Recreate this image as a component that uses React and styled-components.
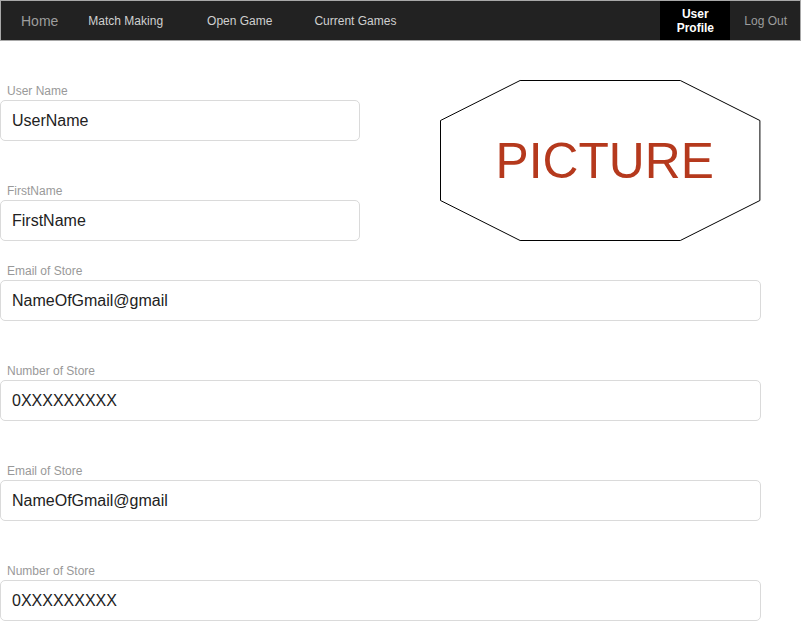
import React from "react";
import styled, { createGlobalStyle } from "styled-components";

const Global = createGlobalStyle`
  html, body { margin: 0; padding: 0; background: #fff; }
  body { font-family: "Liberation Sans", Arial, sans-serif; }
  * { box-sizing: border-box; }
`;

const NavBar = styled.nav`
  display: flex;
  align-items: stretch;
  height: 41px;
  background: #222;
  border: 1px solid #a8a8a8;
`;

const NavLink = styled.a`
  display: flex;
  align-items: center;
  margin-left: ${(p) => p.$ml}px;
  font-size: ${(p) => (p.$big ? 14 : 12)}px;
  color: ${(p) => (p.$muted ? "#9d9d9d" : "#d0d0d0")};
  text-decoration: none;
  white-space: nowrap;
`;

const Spacer = styled.div`
  flex: 1;
`;

const ActiveLink = styled.a`
  display: flex;
  align-items: center;
  justify-content: center;
  width: 70px;
  background: #000;
  color: #fff;
  font-weight: bold;
  font-size: 12px;
  line-height: 14px;
  text-align: center;
  text-decoration: none;
`;

const LogOut = styled.a`
  display: flex;
  align-items: center;
  padding: 0 13px 0 14px;
  font-size: 12px;
  color: #9d9d9d;
  text-decoration: none;
`;

const TopRow = styled.div`
  display: flex;
  align-items: flex-start;
`;

const LeftCol = styled.div`
  width: 55%;
`;

const Field = styled.div`
  display: flex;
  flex-direction: column;
  padding-top: ${(p) => p.$top}px;
`;

const Label = styled.label`
  font-size: 12px;
  line-height: 16px;
  height: 16px;
  color: #999;
  padding-left: 7px;
  transform: translateY(-1px);
`;

const Input = styled.input`
  width: ${(p) => p.$w};
  height: 41px;
  border: 1px solid #dadada;
  border-radius: 5px;
  padding: 0 11px;
  font-family: "Liberation Sans", Arial, sans-serif;
  font-size: 16px;
  color: #222;
  outline: none;
  background: #fff;
`;

const PictureBox = styled.div`
  width: 40%;
  margin-top: 39px;
  height: 160px;
  svg { overflow: visible; display: block; }
`;

const fields = [
  { label: "Email of Store", value: "NameOfGmail@gmail", top: 23 },
  { label: "Number of Store", value: "0XXXXXXXXX", top: 43 },
  { label: "Email of Store", value: "NameOfGmail@gmail", top: 43 },
  { label: "Number of Store", value: "0XXXXXXXXX", top: 43 },
];

export default function App() {
  return (
    <>
      <Global />
      <NavBar>
        <NavLink $ml={20} $big $muted href="#">Home</NavLink>
        <NavLink $ml={30} href="#">Match Making</NavLink>
        <NavLink $ml={44} href="#">Open Game</NavLink>
        <NavLink $ml={42} href="#">Current Games</NavLink>
        <Spacer />
        <ActiveLink href="#">User<br />Profile</ActiveLink>
        <LogOut href="#">Log Out</LogOut>
      </NavBar>
      <TopRow>
        <LeftCol>
          <Field $top={43}>
            <Label>User Name</Label>
            <Input $w="81.8%" defaultValue="UserName" />
          </Field>
          <Field $top={43}>
            <Label>FirstName</Label>
            <Input $w="81.8%" defaultValue="FirstName" />
          </Field>
        </LeftCol>
        <PictureBox>
          <svg width="100%" height="160" viewBox="0 0 322 160" preserveAspectRatio="none">
            <polygon
              points="-0.5,40.5 79.5,0.5 240.5,0.5 320.5,40.5 320.5,120.5 240.5,160.5 79.5,160.5 -0.5,120.5"
              fill="#fff"
              stroke="#000"
              strokeWidth="1"
            />
            <text
              x="164.5"
              y="98"
              textAnchor="middle"
              fontFamily="Liberation Sans, Arial, sans-serif"
              fontSize="50"
              fill="#b5391d"
            >
              PICTURE
            </text>
          </svg>
        </PictureBox>
      </TopRow>
      {fields.map((f, i) => (
        <Field key={i} $top={f.top}>
          <Label>{f.label}</Label>
          <Input $w="95%" defaultValue={f.value} />
        </Field>
      ))}
    </>
  );
}
